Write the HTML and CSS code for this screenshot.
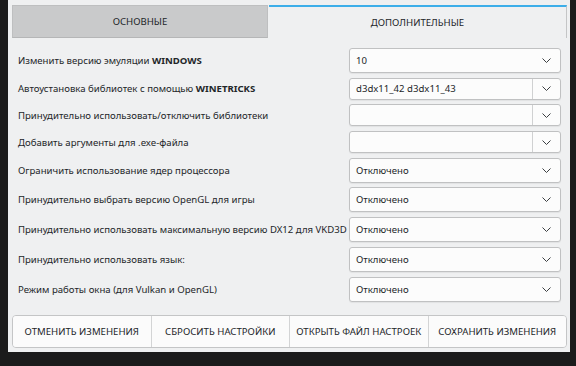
FILE: index.html
```html
<!DOCTYPE html>
<html lang="ru">
  <head>
    <meta charset="UTF-8" />
    <meta name="viewport" content="width=device-width, initial-scale=1.0" />
    <title>Настройки</title>
    <link rel="stylesheet" href="styles.css">
  </head>
  <body>
    <div class="window">
      <div class="tabs">
        <div class="tab">ОСНОВНЫЕ</div>
        <div class="tab active">ДОПОЛНИТЕЛЬНЫЕ</div>
      </div>

      <div class="rows">
        <div class="row">
          <span class="label">Изменить версию эмуляции <b>WINDOWS</b></span>
          <div class="combo">
            <span class="value">10</span>
            <span class="arrow"><svg width="9" height="5" viewBox="0 0 9 5"><polyline points="0.5,0.5 4.5,4.5 8.5,0.5" /></svg></span>
          </div>
        </div>
        <div class="row">
          <span class="label">Автоустановка библиотек с помощью <b>WINETRICKS</b></span>
          <div class="combo edit">
            <span class="value">d3dx11_42 d3dx11_43</span>
            <span class="arrow"><svg width="9" height="5" viewBox="0 0 9 5"><polyline points="0.5,0.5 4.5,4.5 8.5,0.5" /></svg></span>
          </div>
        </div>
        <div class="row">
          <span class="label">Принудительно использовать/отключить библиотеки</span>
          <div class="combo edit">
            <span class="value"></span>
            <span class="arrow"><svg width="9" height="5" viewBox="0 0 9 5"><polyline points="0.5,0.5 4.5,4.5 8.5,0.5" /></svg></span>
          </div>
        </div>
        <div class="row">
          <span class="label">Добавить аргументы для .exe-файла</span>
          <div class="combo edit">
            <span class="value"></span>
            <span class="arrow"><svg width="9" height="5" viewBox="0 0 9 5"><polyline points="0.5,0.5 4.5,4.5 8.5,0.5" /></svg></span>
          </div>
        </div>
        <div class="row">
          <span class="label">Ограничить использование ядер процессора</span>
          <div class="combo">
            <span class="value">Отключено</span>
            <span class="arrow"><svg width="9" height="5" viewBox="0 0 9 5"><polyline points="0.5,0.5 4.5,4.5 8.5,0.5" /></svg></span>
          </div>
        </div>
        <div class="row">
          <span class="label">Принудительно выбрать версию OpenGL для игры</span>
          <div class="combo">
            <span class="value">Отключено</span>
            <span class="arrow"><svg width="9" height="5" viewBox="0 0 9 5"><polyline points="0.5,0.5 4.5,4.5 8.5,0.5" /></svg></span>
          </div>
        </div>
        <div class="row">
          <span class="label">Принудительно использовать максимальную версию DX12 для VKD3D</span>
          <div class="combo">
            <span class="value">Отключено</span>
            <span class="arrow"><svg width="9" height="5" viewBox="0 0 9 5"><polyline points="0.5,0.5 4.5,4.5 8.5,0.5" /></svg></span>
          </div>
        </div>
        <div class="row">
          <span class="label">Принудительно использовать язык:</span>
          <div class="combo">
            <span class="value">Отключено</span>
            <span class="arrow"><svg width="9" height="5" viewBox="0 0 9 5"><polyline points="0.5,0.5 4.5,4.5 8.5,0.5" /></svg></span>
          </div>
        </div>
        <div class="row">
          <span class="label">Режим работы окна (для Vulkan и OpenGL)</span>
          <div class="combo">
            <span class="value">Отключено</span>
            <span class="arrow"><svg width="9" height="5" viewBox="0 0 9 5"><polyline points="0.5,0.5 4.5,4.5 8.5,0.5" /></svg></span>
          </div>
        </div>
      </div>

      <div class="buttons">
        <button>ОТМЕНИТЬ ИЗМЕНЕНИЯ</button>
        <button>СБРОСИТЬ НАСТРОЙКИ</button>
        <button>ОТКРЫТЬ ФАЙЛ НАСТРОЕК</button>
        <button>СОХРАНИТЬ ИЗМЕНЕНИЯ</button>
      </div>
    </div>
  </body>
</html>
```

FILE: styles.css
```css
body {
  margin: 0;
  background-color: #1b1b1b;
  font-family: 'Noto Sans', 'Open Sans', sans-serif;
  font-size: 9.6px;
  color: #232629;
}
.window {
  margin-left: 8px;
  width: 562px;
  height: 352px;
  background-color: #eff0f1;
  display: flex;
  flex-direction: column;
}

/* tabs */
.tabs {
  display: flex;
  padding: 5px 3px 0 4px;
}
.tab {
  height: 33px;
  display: flex;
  align-items: center;
  justify-content: center;
  box-sizing: border-box;
}
.tab:first-child {
  width: 256px;
  background-color: #c9cacb;
  border: 1px solid #bebfc0;
  border-bottom-color: #b5b6b7;
}
.tab.active {
  flex-grow: 1;
  margin-left: 1px;
  border-top: 2px solid #3daee9;
  border-right: 1px solid #c4c5c6;
}

/* settings rows */
.rows {
  display: flex;
  flex-direction: column;
  gap: 4.7px;
  padding: 10px 9px 0 10px;
}
.row {
  display: flex;
  align-items: center;
}
.label {
  flex-grow: 1;
  white-space: nowrap;
}
.combo {
  width: 212px;
  height: 25px;
  flex-shrink: 0;
  box-sizing: border-box;
  display: flex;
  align-items: center;
  background-color: #fcfcfc;
  border: 1px solid #c0c1c2;
  border-radius: 3px;
  box-shadow: 0 1px 1px rgba(0, 0, 0, 0.06);
}
.combo.edit {
  height: 22px;
}
.value {
  flex-grow: 1;
  padding-left: 6px;
}
.arrow {
  width: 27px;
  height: 100%;
  display: flex;
  align-items: center;
  justify-content: center;
}
.combo.edit .arrow {
  border-left: 1px solid #d0d1d2;
}
.arrow svg {
  fill: none;
  stroke: #3b3e41;
  stroke-width: 1;
}

/* bottom buttons */
.buttons {
  display: flex;
  margin: auto 3px 4px 4px;
  border: 1px solid #c4c5c6;
  border-radius: 4px;
  overflow: hidden;
}
.buttons button {
  flex: 1;
  height: 31px;
  font-family: inherit;
  font-size: 9.6px;
  color: #232629;
  background-color: #fbfbfb;
  border: none;
  border-left: 1px solid #d3d4d5;
  padding: 0;
}
.buttons button:first-child {
  border-left: none;
}
```
